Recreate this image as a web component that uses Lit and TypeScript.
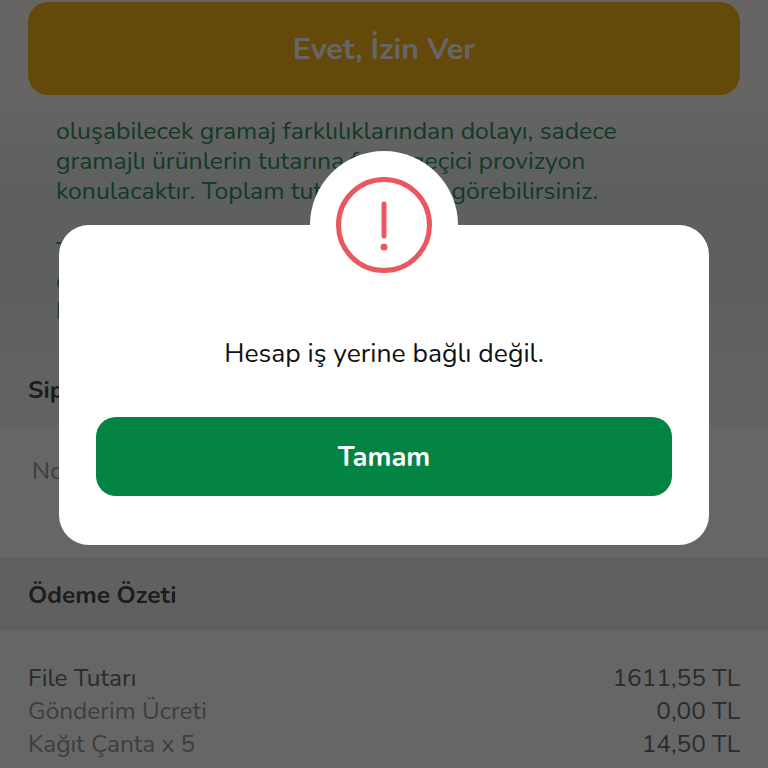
import { LitElement, html, css } from "lit";
import { customElement } from "lit/decorators.js";

@customElement("app-root")
export class AppRoot extends LitElement {
  static styles = css`
    :host { display: block; position: relative; width: 768px; height: 768px; overflow: hidden; background: #fff;
      font-family: "Nunito", "Lato", "Liberation Sans", sans-serif; color: #4a4a4a; }
    .page { display: flex; flex-direction: column; height: 768px; overflow: hidden; }
    .top { padding: 2px 28px 17px; flex: none; background: #fffdf8; }
    .allow { height: 93px; border-radius: 20px; background: #fdb61a; color: #fff; display: flex; align-items: center; justify-content: center;
      font-size: 30.3px; font-weight: 700; }
    .note { height: 238px; flex: none; padding: 4px 56px 0; background: linear-gradient(#f8f8f5 0, #e8f0ec 35%, #eef0ef 100%); color: #2f9167; font-size: 24.75px; line-height: 30px; overflow: hidden; box-sizing: border-box; white-space: nowrap; }
    .note p { margin: 0 0 30px; }
    .tight { letter-spacing: -0.6px; }
    .head { height: 77px; flex: none; display: flex; align-items: center; padding: 3px 28px 0; box-sizing: border-box; font-size: 24.5px; font-weight: 700; background: #f6f6f6; }
    .addr { height: 130px; flex: none; padding: 27px 32px; box-sizing: border-box; background: #fff; font-size: 24.5px; color: #9a9a9a; }
    .sum { height: 74px; flex: none; display: flex; align-items: center; padding: 2px 28px 0; box-sizing: border-box; font-size: 24.5px; font-weight: 700; background: #f0f0f0; }
    .rows { padding: 31px 28px 0; background: #fff; font-size: 24.4px; line-height: 33px; flex: 1; }
    .row { display: flex; justify-content: space-between; color: #9c9c9c; }
    .row.main { color: #6c6c6c; }
    .row .amt { color: #6c6c6c; }
    .scrim { position: absolute; inset: 0; background: rgba(0, 0, 0, 0.6); }
    .modal { position: absolute; left: 59px; top: 225px; width: 650px; height: 320px; background: #fff; border-radius: 30px; box-sizing: border-box;
      padding: 0 37px 49px; display: flex; flex-direction: column; justify-content: flex-end; align-items: stretch; }
    .bump { position: absolute; left: 251px; top: -74px; width: 148px; height: 148px; border-radius: 50%; background: #fff; display: flex; align-items: center; justify-content: center; }
    .msg { text-align: center; font-size: 26.5px; color: #111; margin-bottom: 47px; line-height: 34px; }
    .ok { height: 79px; border-radius: 20px; background: #048443; color: #fff; display: flex; align-items: center; justify-content: center; font-size: 27.3px; font-weight: 700; }
  `;

  render() {
    return html`
      <div class="page">
        <div class="top"><div class="allow">Evet, İzin Ver</div></div>
        <div class="note">
          <p>oluşabilecek gramaj farklılıklarından dolayı, sadece<br />gramajlı ürünlerin tutarına fazla geçici provizyon<br />konulacaktır. Toplam tut<span class="tight">arı sepetten </span>görebilirsiniz.</p>
          <p>Tahsilat teslimat sonrası<br />onaylanan tutar üzerinden<br />kesinleştirilecektir.</p>
        </div>
        <div class="head">Sipariş Notu</div>
        <div class="addr">Not ekleyin</div>
        <div class="sum">Ödeme Özeti</div>
        <div class="rows">
          <div class="row main"><span>File Tutarı</span><span>1611,55 TL</span></div>
          <div class="row"><span>Gönderim Ücreti</span><span class="amt">0,00 TL</span></div>
          <div class="row"><span>Kağıt Çanta x 5</span><span class="amt">14,50 TL</span></div>
        </div>
      </div>
      <div class="scrim"></div>
      <div class="modal">
        <div class="bump">
          <svg width="96" height="96" viewBox="0 0 96 96" fill="none" stroke="#e8585e">
            <circle cx="48" cy="48" r="45.5" stroke-width="5" />
            <path d="M48 27V59" stroke-width="5" stroke-linecap="round" />
            <circle cx="48" cy="70" r="3.5" fill="#e8585e" stroke="none" />
          </svg>
        </div>
        <div class="msg">Hesap iş yerine bağlı değil.</div>
        <div class="ok">Tamam</div>
      </div>
    `;
  }
}
